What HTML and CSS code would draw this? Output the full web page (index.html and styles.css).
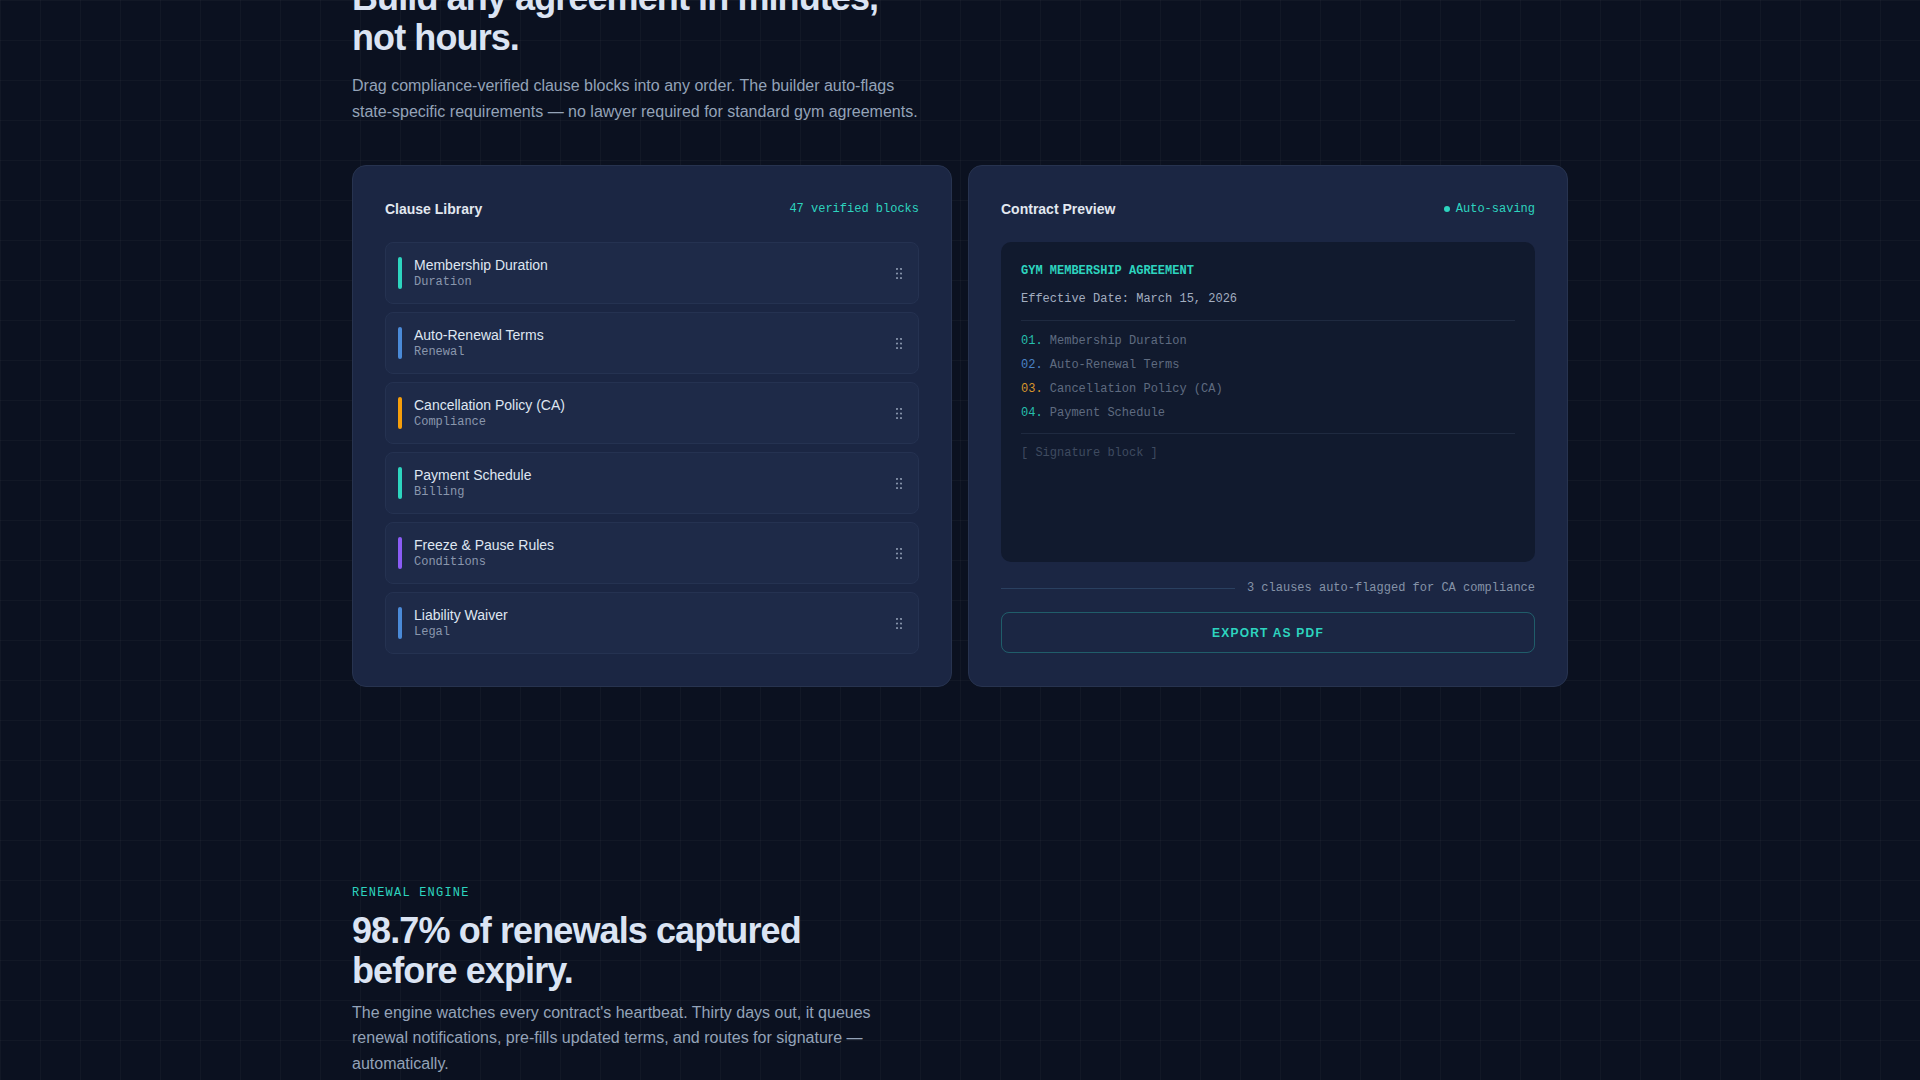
FILE: index.html
```html
<!DOCTYPE html>
<html lang="en">
<head>
<meta charset="utf-8">
<title>Agreement Builder</title>
<link rel="stylesheet" href="styles.css">
</head>
<body>
<main class="page">
  <section class="builder">
    <h2 class="headline">Build any agreement in minutes, not hours.</h2>
    <p class="lede">Drag compliance-verified clause blocks into any order. The builder auto-flags state-specific requirements — no lawyer required for standard gym agreements.</p>

    <div class="panels">
      <div class="card">
        <div class="card-head">
          <h3 class="card-title">Clause Library</h3>
          <span class="meta">47 verified blocks</span>
        </div>
        <ul class="clauses">
          <li class="clause">
            <span class="bar teal"></span>
            <div class="clause-text"><span class="clause-name">Membership Duration</span><span class="clause-tag">Duration</span></div>
            <svg class="grip" viewBox="0 0 6 11"><circle cx="1" cy="1" r="1.1"/><circle cx="5" cy="1" r="1.1"/><circle cx="1" cy="5.5" r="1.1"/><circle cx="5" cy="5.5" r="1.1"/><circle cx="1" cy="10" r="1.1"/><circle cx="5" cy="10" r="1.1"/></svg>
          </li>
          <li class="clause">
            <span class="bar blue"></span>
            <div class="clause-text"><span class="clause-name">Auto-Renewal Terms</span><span class="clause-tag">Renewal</span></div>
            <svg class="grip" viewBox="0 0 6 11"><circle cx="1" cy="1" r="1.1"/><circle cx="5" cy="1" r="1.1"/><circle cx="1" cy="5.5" r="1.1"/><circle cx="5" cy="5.5" r="1.1"/><circle cx="1" cy="10" r="1.1"/><circle cx="5" cy="10" r="1.1"/></svg>
          </li>
          <li class="clause">
            <span class="bar orange"></span>
            <div class="clause-text"><span class="clause-name">Cancellation Policy (CA)</span><span class="clause-tag">Compliance</span></div>
            <svg class="grip" viewBox="0 0 6 11"><circle cx="1" cy="1" r="1.1"/><circle cx="5" cy="1" r="1.1"/><circle cx="1" cy="5.5" r="1.1"/><circle cx="5" cy="5.5" r="1.1"/><circle cx="1" cy="10" r="1.1"/><circle cx="5" cy="10" r="1.1"/></svg>
          </li>
          <li class="clause">
            <span class="bar teal"></span>
            <div class="clause-text"><span class="clause-name">Payment Schedule</span><span class="clause-tag">Billing</span></div>
            <svg class="grip" viewBox="0 0 6 11"><circle cx="1" cy="1" r="1.1"/><circle cx="5" cy="1" r="1.1"/><circle cx="1" cy="5.5" r="1.1"/><circle cx="5" cy="5.5" r="1.1"/><circle cx="1" cy="10" r="1.1"/><circle cx="5" cy="10" r="1.1"/></svg>
          </li>
          <li class="clause">
            <span class="bar purple"></span>
            <div class="clause-text"><span class="clause-name">Freeze &amp; Pause Rules</span><span class="clause-tag">Conditions</span></div>
            <svg class="grip" viewBox="0 0 6 11"><circle cx="1" cy="1" r="1.1"/><circle cx="5" cy="1" r="1.1"/><circle cx="1" cy="5.5" r="1.1"/><circle cx="5" cy="5.5" r="1.1"/><circle cx="1" cy="10" r="1.1"/><circle cx="5" cy="10" r="1.1"/></svg>
          </li>
          <li class="clause">
            <span class="bar blue"></span>
            <div class="clause-text"><span class="clause-name">Liability Waiver</span><span class="clause-tag">Legal</span></div>
            <svg class="grip" viewBox="0 0 6 11"><circle cx="1" cy="1" r="1.1"/><circle cx="5" cy="1" r="1.1"/><circle cx="1" cy="5.5" r="1.1"/><circle cx="5" cy="5.5" r="1.1"/><circle cx="1" cy="10" r="1.1"/><circle cx="5" cy="10" r="1.1"/></svg>
          </li>
        </ul>
      </div>

      <div class="card">
        <div class="card-head">
          <h3 class="card-title">Contract Preview</h3>
          <span class="meta"><span class="dot"></span>Auto-saving</span>
        </div>
        <div class="doc">
          <div class="doc-head">
            <div class="doc-title">GYM MEMBERSHIP AGREEMENT</div>
            <div class="doc-date">Effective Date: March 15, 2026</div>
          </div>
          <ol class="doc-list">
            <li><span class="num n-teal">01.</span> Membership Duration</li>
            <li><span class="num n-blue">02.</span> Auto-Renewal Terms</li>
            <li><span class="num n-orange">03.</span> Cancellation Policy (CA)</li>
            <li><span class="num n-teal">04.</span> Payment Schedule</li>
          </ol>
          <div class="doc-sign">[ Signature block ]</div>
        </div>
        <div class="flag-row">
          <span class="flag-line"></span>
          <span class="flag-text">3 clauses auto-flagged for CA compliance</span>
        </div>
        <button class="export" type="button">EXPORT AS PDF</button>
      </div>
    </div>
  </section>

  <section class="renewal">
    <div class="eyebrow">RENEWAL ENGINE</div>
    <h2 class="headline second">98.7% of renewals captured before expiry.</h2>
    <p class="lede">The engine watches every contract's heartbeat. Thirty days out, it queues renewal notifications, pre-fills updated terms, and routes for signature — automatically.</p>
  </section>
</main>
</body>
</html>
```

FILE: styles.css
```css
* {
  box-sizing: border-box;
}

html,
body {
  margin: 0;
  padding: 0;
}

body {
  background-color: #0b1120;
  background-image:
    linear-gradient(rgba(255, 255, 255, 0.028) 1px, transparent 1px),
    linear-gradient(90deg, rgba(255, 255, 255, 0.028) 1px, transparent 1px);
  background-size: 40px 40px;
  font-family: "Liberation Sans", Arial, sans-serif;
  color: #e2e8f0;
  overflow: hidden;
  height: 1080px;
}

.page {
  max-width: 1280px;
  margin: 0 auto;
  padding: 0 32px;
}

.builder {
  margin-top: -22px;
}

.headline {
  margin: 0 0 16px;
  max-width: 550px;
  font-size: 36px;
  line-height: 1.1;
  font-weight: 700;
  letter-spacing: -0.025em;
  color: #dbe4f3;
}

.headline.second {
  margin-bottom: 9px;
}

.lede {
  margin: 0;
  max-width: 572px;
  font-size: 16px;
  line-height: 25.6px;
  color: #94a3b8;
}

.panels {
  margin-top: 41px;
  display: grid;
  grid-template-columns: 1fr 1fr;
  gap: 16px;
}

.card {
  display: flex;
  flex-direction: column;
  padding: 32px;
  background: #1b2643;
  border: 1px solid #27334f;
  border-radius: 14px;
}

.card-head {
  display: flex;
  align-items: center;
  justify-content: space-between;
  height: 21px;
  margin-bottom: 23px;
}

.card-title {
  margin: 0;
  font-size: 14px;
  font-weight: 700;
  color: #e2e8f0;
}

.meta {
  display: flex;
  align-items: center;
  font-family: "Liberation Mono", "DejaVu Sans Mono", monospace;
  font-size: 12px;
  color: #2dd4bf;
}

.dot {
  width: 6px;
  height: 6px;
  border-radius: 50%;
  background: #2dd4bf;
  margin-right: 6px;
}

.clauses {
  list-style: none;
  margin: 0;
  padding: 0;
  display: flex;
  flex-direction: column;
  gap: 8px;
}

.clause {
  display: flex;
  align-items: center;
  gap: 12px;
  padding: 13px 16px 13px 12px;
  background: #1e2a48;
  border: 1px solid #253251;
  border-radius: 8px;
}

.bar {
  flex: none;
  width: 4px;
  height: 32px;
  border-radius: 2px;
}

.bar.teal { background: #2dd4bf; }
.bar.blue { background: #4a8ad8; }
.bar.orange { background: #f59e0b; }
.bar.purple { background: #8b5cf6; }

.clause-text {
  flex: 1;
  display: flex;
  flex-direction: column;
}

.clause-name {
  font-size: 14px;
  line-height: 19px;
  color: #dfe6f1;
}

.clause-tag {
  font-family: "Liberation Mono", "DejaVu Sans Mono", monospace;
  font-size: 12px;
  line-height: 15px;
  color: #8a97ad;
}

.grip {
  flex: none;
  width: 6px;
  height: 11px;
  fill: #8390a8;
}

.doc {
  height: 320px;
  padding: 21px 20px 18px;
  background: #111a2e;
  border-radius: 10px;
  font-family: "Liberation Mono", "DejaVu Sans Mono", monospace;
  font-size: 12px;
}

.doc-head {
  padding-bottom: 13px;
  border-bottom: 1px solid #1f2a40;
}

.doc-title {
  line-height: 16px;
  font-weight: 700;
  color: #2dd4bf;
  margin-bottom: 12px;
}

.doc-date {
  line-height: 16px;
  color: #a3aec0;
}

.doc-list {
  list-style: none;
  margin: 0;
  padding: 8px 0 8px;
  border-bottom: 1px solid #1f2a40;
}

.doc-list li {
  line-height: 24px;
  color: #5f6b80;
}

.num.n-teal { color: #26bfac; }
.num.n-blue { color: #4a82c6; }
.num.n-orange { color: #d9962c; }

.doc-sign {
  margin-top: 11px;
  line-height: 16px;
  color: #3f4b60;
}

.flag-row {
  margin-top: 17px;
  display: flex;
  align-items: center;
  gap: 12px;
  height: 18px;
}

.flag-line {
  flex: 1;
  height: 1px;
  background: #2a4060;
}

.flag-text {
  font-family: "Liberation Mono", "DejaVu Sans Mono", monospace;
  font-size: 12px;
  color: #8593a8;
}

.export {
  margin-top: 15px;
  width: 100%;
  height: 41px;
  background: transparent;
  border: 1px solid rgba(45, 212, 191, 0.32);
  border-radius: 8px;
  color: #2dd4bf;
  font-family: "Liberation Sans", Arial, sans-serif;
  font-size: 12px;
  font-weight: 700;
  letter-spacing: 0.1em;
  cursor: pointer;
}

.renewal {
  padding-top: 198px;
}

.eyebrow {
  font-family: "Liberation Mono", "DejaVu Sans Mono", monospace;
  font-size: 12px;
  line-height: 16px;
  letter-spacing: 0.1em;
  color: #2dd4bf;
  margin-bottom: 10px;
}
```
